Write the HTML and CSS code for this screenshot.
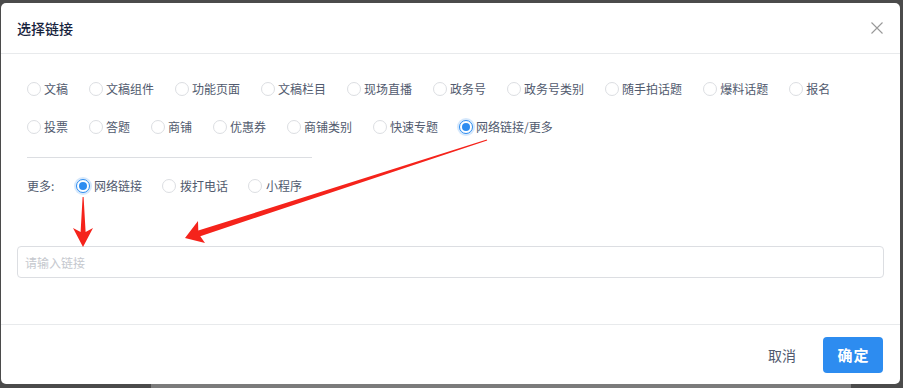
FILE: index.html
```html
<!DOCTYPE html>
<html lang="zh-CN">
<head>
<meta charset="utf-8">
<title>选择链接</title>
<link rel="stylesheet" href="styles.css">
</head>
<body>
<div class="modal">
  <div class="modal-header">
    <div class="modal-title">选择链接</div>
    <span class="modal-close">
      <svg width="12" height="12" viewBox="0 0 12 12"><path d="M0.5 0.5 L11.5 11.5 M11.5 0.5 L0.5 11.5" stroke="#999" stroke-width="1.1" fill="none"/></svg>
    </span>
  </div>
  <div class="modal-body">
    <div class="options">
      <div class="radio-group">
        <label class="radio"><span class="radio-dot"></span><span class="radio-label">文稿</span></label>
        <label class="radio"><span class="radio-dot"></span><span class="radio-label">文稿组件</span></label>
        <label class="radio"><span class="radio-dot"></span><span class="radio-label">功能页面</span></label>
        <label class="radio"><span class="radio-dot"></span><span class="radio-label">文稿栏目</span></label>
        <label class="radio"><span class="radio-dot"></span><span class="radio-label">现场直播</span></label>
        <label class="radio"><span class="radio-dot"></span><span class="radio-label">政务号</span></label>
        <label class="radio"><span class="radio-dot"></span><span class="radio-label">政务号类别</span></label>
        <label class="radio"><span class="radio-dot"></span><span class="radio-label">随手拍话题</span></label>
        <label class="radio"><span class="radio-dot"></span><span class="radio-label">爆料话题</span></label>
        <label class="radio"><span class="radio-dot"></span><span class="radio-label">报名</span></label>
        <label class="radio"><span class="radio-dot"></span><span class="radio-label">投票</span></label>
        <label class="radio"><span class="radio-dot"></span><span class="radio-label">答题</span></label>
        <label class="radio"><span class="radio-dot"></span><span class="radio-label">商铺</span></label>
        <label class="radio"><span class="radio-dot"></span><span class="radio-label">优惠券</span></label>
        <label class="radio"><span class="radio-dot"></span><span class="radio-label">商铺类别</span></label>
        <label class="radio"><span class="radio-dot"></span><span class="radio-label">快速专题</span></label>
        <label class="radio checked"><span class="radio-dot"></span><span class="radio-label">网络链接/更多</span></label>
      </div>
      <div class="divider"></div>
      <div class="more-row">
        <span class="more-label">更多:</span>
        <div class="radio-group">
          <label class="radio checked tight"><span class="radio-dot"></span><span class="radio-label">网络链接</span></label>
          <label class="radio tight"><span class="radio-dot"></span><span class="radio-label">拨打电话</span></label>
          <label class="radio tight"><span class="radio-dot"></span><span class="radio-label">小程序</span></label>
        </div>
      </div>
    </div>
    <div class="input-wrap">
      <input class="link-input" type="text" placeholder="请输入链接">
    </div>
  </div>
  <div class="modal-footer">
    <button class="btn btn-text">取消</button>
    <button class="btn btn-primary">确定</button>
  </div>
</div>
<div class="strip"></div>
<svg class="annotations" width="903" height="388" viewBox="0 0 903 388">
  <polygon fill="#f5231b" points="82.6,197 83.6,197 85.6,232 93,228 83,247 73,228 80.6,232"/>
  <polygon fill="#f5231b" points="486.8,139.5 198.3,230.6 198,221 185,238 205,243 200.3,236.2 487.2,140.5"/>
</svg>
</body>
</html>
```

FILE: styles.css
```css
html, body {
  margin: 0;
  padding: 0;
}
body {
  width: 903px;
  height: 388px;
  overflow: hidden;
  background: #4b4b4b;
  font-family: "Noto Sans CJK SC", "Microsoft YaHei", sans-serif;
  color: #515a6e;
  position: relative;
}
.modal {
  margin: 3px 3px 0 1px;
  width: 899px;
  height: 381px;
  background: #fff;
  border-radius: 5px;
  display: flex;
  flex-direction: column;
}
.modal-header {
  height: 50px;
  border-bottom: 1px solid #e8eaec;
  display: flex;
  align-items: center;
  justify-content: space-between;
  padding: 0 17px 0 16px;
}
.modal-title {
  font-size: 14px;
  font-weight: 500;
  color: #17233d;
  line-height: 20px;
}
.modal-close {
  display: flex;
  width: 12px;
  height: 12px;
}
.modal-body {
  flex: 1;
  padding: 25px 16px 0;
}
.options {
  padding: 0 10px;
}
.radio-group {
  display: flex;
  flex-wrap: wrap;
  row-gap: 18px;
}
.radio {
  display: inline-flex;
  align-items: center;
  height: 20px;
  margin-right: 21px;
  font-size: 12px;
  line-height: 20px;
  color: #515a6e;
}
.radio.tight {
  margin-right: 20px;
}
.radio-dot {
  width: 14px;
  height: 14px;
  box-sizing: border-box;
  border: 1px solid #dcdee2;
  border-radius: 50%;
  background: #fff;
  margin-right: 3px;
  position: relative;
}
.radio.checked .radio-dot {
  border-color: #2d8cf0;
  box-shadow: 0 0 0 2px rgba(45, 140, 240, 0.2);
}
.radio.checked .radio-dot::after {
  content: "";
  position: absolute;
  left: 2px;
  top: 2px;
  width: 8px;
  height: 8px;
  border-radius: 50%;
  background: #2d8cf0;
}
.radio.tight .radio-dot {
  margin-right: 4px;
}
.divider {
  width: 285px;
  height: 1px;
  background: #dcdee2;
  margin: 20px 0 18px;
}
.more-row {
  display: flex;
  align-items: center;
  height: 20px;
}
.more-label {
  width: 49px;
  font-size: 12px;
  line-height: 20px;
  color: #515a6e;
}
.input-wrap {
  margin-top: 50px;
}
.link-input {
  display: block;
  width: 100%;
  height: 32px;
  box-sizing: border-box;
  border: 1px solid #dcdee2;
  border-radius: 4px;
  padding: 4px 7px;
  font-family: inherit;
  font-size: 12px;
  color: #515a6e;
  outline: none;
}
.link-input::placeholder {
  color: #c5c8ce;
}
.modal-footer {
  height: 59px;
  border-top: 1px solid #e8eaec;
  display: flex;
  align-items: center;
  justify-content: flex-end;
  gap: 11px;
  padding-right: 17px;
}
.btn {
  width: 60px;
  height: 36px;
  border-radius: 4px;
  border: none;
  font-family: inherit;
  font-size: 14px;
  padding: 0;
  cursor: pointer;
}
.btn-text {
  background: transparent;
  color: #515a6e;
}
.btn-primary {
  background: #2d8cf0;
  color: #fff;
  font-size: 15px;
  font-weight: 700;
  letter-spacing: 1px;
  text-indent: 1px;
}
.strip {
  height: 4px;
  width: 700px;
  margin-left: 151px;
  background: #7b7b7b;
}
.annotations {
  position: absolute;
  left: 0;
  top: 0;
  pointer-events: none;
}
```
